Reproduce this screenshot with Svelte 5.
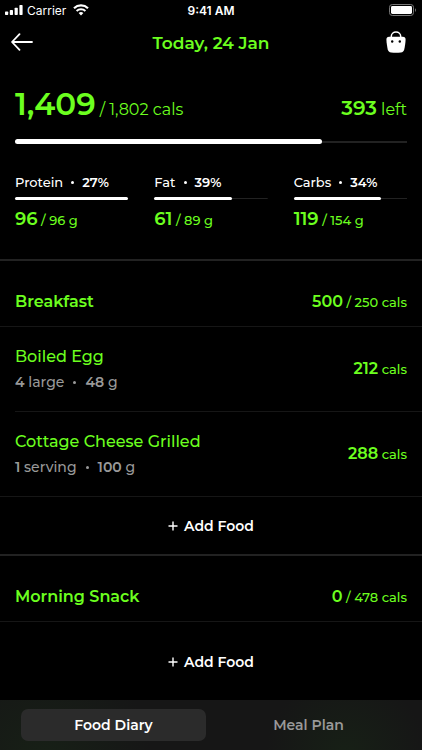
<script>
	let tab = 'diary';

	const eaten = 1409;
	const goal = 1802;

	const macros = [
		{ name: 'Protein', share: 27, value: 96, goal: 96 },
		{ name: 'Fat', share: 39, value: 61, goal: 89 },
		{ name: 'Carbs', share: 34, value: 119, goal: 154 }
	];

	const meals = [
		{
			name: 'Breakfast',
			cals: 500,
			goal: 250,
			foods: [
				{ name: 'Boiled Egg', count: 4, unit: 'large', grams: 48, cals: 212 },
				{ name: 'Cottage Cheese Grilled', count: 1, unit: 'serving', grams: 100, cals: 288 }
			]
		},
		{ name: 'Morning Snack', cals: 0, goal: 478, foods: [] }
	];

	function percent(value, max) {
		return Math.min(100, (value / max) * 100);
	}
</script>

<div class="app">
	<div class="status">
		<div class="carrier">
			<svg width="18" height="10" viewBox="0 0 18 10" fill="#fff" aria-hidden="true">
				<rect x="0" y="6.5" width="3.2" height="3.5" rx="0.7" />
				<rect x="4.8" y="5" width="3.2" height="5" rx="0.7" />
				<rect x="9.6" y="2.7" width="3.2" height="7.3" rx="0.7" />
				<rect x="14.4" y="0" width="3.2" height="10" rx="0.7" />
			</svg>
			<span>Carrier</span>
			<svg class="wifi" width="16" height="12" viewBox="0 0 16 12" aria-hidden="true">
				<path d="M1 4.2a10.2 10.2 0 0 1 14 0" fill="none" stroke="#fff" stroke-width="2.2" />
				<path d="M3.6 7a6.4 6.4 0 0 1 8.8 0" fill="none" stroke="#fff" stroke-width="2" />
				<path d="M5.6 9.1a3.5 3.5 0 0 1 4.8 0L8 11.6z" fill="#fff" />
			</svg>
		</div>
		<span class="time">9:41 AM</span>
		<svg class="battery" width="28" height="12" viewBox="0 0 28 12" aria-hidden="true">
			<rect x="0.5" y="0.5" width="24" height="11" rx="2.8" fill="none" stroke="#777" />
			<rect x="2" y="2" width="21" height="8" rx="1.4" fill="#fff" />
			<path d="M26 4.2c1.3.4 1.3 3.2 0 3.6z" fill="#777" />
		</svg>
	</div>

	<header>
		<button class="icon" aria-label="Back">
			<svg width="22" height="18" viewBox="0 0 22 18" fill="none" stroke="#fff" stroke-width="1.8" stroke-linecap="round" stroke-linejoin="round">
				<path d="M8.5 1.2L1 9l7.5 7.8M1.2 9H21" />
			</svg>
		</button>
		<h1>Today, 24 Jan</h1>
		<button class="icon bag" aria-label="Shopping bag">
			<svg width="20" height="22" viewBox="0 0 20 22">
				<path d="M5.3 6.5V5.3a4.7 4.3 0 0 1 9.4 0v1.2" fill="none" stroke="#fff" stroke-width="1.5" />
				<path d="M3.2 5.8h13.6c1.9 0 2.9 1.1 2.8 3-.2 3.500-.7 6.700-1.300 9.400-.5 2-1.500 3-3.500 3.200-3.200.3-6.400.3-9.600 0-2-.2-3-1.200-3.500-3.200C1.100 15.500.6 12.300.4 8.800.3 6.900 1.300 5.800 3.200 5.800z" fill="#fff" />
				<circle cx="6.2" cy="10.5" r="1.2" fill="#000" />
				<circle cx="13.8" cy="10.5" r="1.2" fill="#000" />
			</svg>
		</button>
	</header>

	<section class="summary">
		<div class="totals">
			<div><span class="eaten">{eaten.toLocaleString('en-US')}</span> / {goal.toLocaleString('en-US')} cals</div>
			<div><span class="left">{goal - eaten}</span> left</div>
		</div>
		<div class="bar big">
			<div class="fill" style="width: {percent(eaten, goal)}%"></div>
		</div>

		<div class="macros">
			{#each macros as macro}
				<div class="macro">
					<div class="label">{macro.name}<i></i><b>{macro.share}%</b></div>
					<div class="bar">
						<div class="fill" style="width: {percent(macro.value, macro.goal)}%"></div>
					</div>
					<div class="grams"><b>{macro.value}</b> / {macro.goal} g</div>
				</div>
			{/each}
		</div>
	</section>

	{#each meals as meal}
		<section class="meal">
			<div class="meal-head">
				<h2>{meal.name}</h2>
				<div class="cals"><b>{meal.cals}</b> / {meal.goal} cals</div>
			</div>
			{#if meal.foods.length}
				<ul>
					{#each meal.foods as food}
						<li>
							<div>
								<h3>{food.name}</h3>
								<p><b>{food.count}</b> {food.unit}<i></i><b>{food.grams}</b> g</p>
							</div>
							<div class="cals"><b>{food.cals}</b> cals</div>
						</li>
					{/each}
				</ul>
			{/if}
			<button class="add" class:tall={!meal.foods.length}>
				<svg width="10" height="10" viewBox="0 0 10 10" stroke="#fff" stroke-width="1.4" aria-hidden="true">
					<path d="M5 0.5V9.5M0.5 5H9.5" />
				</svg>
				Add Food
			</button>
		</section>
	{/each}

	<nav>
		<button class:active={tab === 'diary'} on:click={() => (tab = 'diary')}>Food Diary</button>
		<button class:active={tab === 'plan'} on:click={() => (tab = 'plan')}>Meal Plan</button>
	</nav>
</div>

<style>
	:global(body) {
		background: #000;
	}

	.app {
		min-height: 100vh;
		display: flex;
		flex-direction: column;
		background: #000;
		color: #6cff1f;
		font-family: Montserrat, Inter, sans-serif;
		font-weight: 500;
	}

	h1,
	h2,
	h3,
	p,
	ul {
		margin: 0;
		padding: 0;
	}

	button {
		border: 0;
		padding: 0;
		background: none;
		color: #fff;
		font-family: inherit;
		cursor: pointer;
	}

	b {
		font-weight: 600;
	}

	/* dot between two facts */
	i {
		display: inline-block;
		width: 3px;
		height: 3px;
		margin: 0 8px;
		border-radius: 50%;
		background: currentColor;
		vertical-align: 3px;
	}

	.status {
		display: grid;
		grid-template-columns: 1fr auto 1fr;
		align-items: center;
		height: 20px;
		padding: 0 5px;
		color: #fff;
		font-family: Inter, sans-serif;
		font-size: 12px;
		font-weight: 400;
	}

	.carrier {
		display: flex;
		align-items: center;
		gap: 4px;
	}

	.wifi {
		margin-left: 3px;
	}

	.time {
		font-weight: 600;
	}

	.battery {
		justify-self: end;
	}

	header {
		display: grid;
		grid-template-columns: 1fr auto 1fr;
		align-items: center;
		height: 44px;
		padding: 0 11px;
	}

	.icon {
		display: flex;
		justify-self: start;
	}

	.bag {
		justify-self: end;
		padding-right: 5px;
	}

	h1 {
		padding-top: 2px;
		font-size: 17px;
		font-weight: 600;
		line-height: 24px;
	}

	.summary {
		padding: 20px 15px 26px;
	}

	.totals {
		display: flex;
		justify-content: space-between;
		align-items: baseline;
		font-size: 16px;
		font-weight: 400;
		line-height: 40px;
	}

	.eaten {
		font-size: 31px;
		font-weight: 600;
	}

	.left {
		font-size: 20px;
		font-weight: 600;
	}

	.bar {
		display: flex;
		align-items: center;
		height: 3px;
		background: linear-gradient(#222, #222) center / 100% 1px no-repeat;
	}

	.fill {
		height: 100%;
		border-radius: 3px;
		background: #fff;
	}

	.big {
		height: 5px;
		margin-top: 9px;
		background-size: 100% 2px;
	}

	.macros {
		display: grid;
		grid-template-columns: repeat(3, 1fr);
		gap: 26px;
		margin-top: 28px;
	}

	.label {
		margin-bottom: 5px;
		color: #fff;
		font-size: 13px;
		line-height: 20px;
	}

	.grams {
		margin-top: 6px;
		font-size: 13px;
		line-height: 26px;
	}

	.grams b {
		font-size: 18px;
	}

	.meal {
		border-top: 2px solid #222;
	}

	.meal-head {
		display: flex;
		justify-content: space-between;
		align-items: center;
		height: 65px;
		padding: 0 15px;
		border-bottom: 1px solid #161616;
	}

	.meal-head .cals,
	h2 {
		padding-top: 16px;
	}

	h2 {
		font-size: 16px;
		font-weight: 600;
		line-height: 20px;
	}

	.cals {
		font-size: 13px;
		line-height: 20px;
	}

	.cals b {
		font-size: 16px;
	}

	ul {
		list-style: none;
		border-bottom: 1px solid #161616;
	}

	li {
		display: flex;
		justify-content: space-between;
		align-items: center;
		height: 84px;
		margin-left: 15px;
		padding-right: 15px;
	}

	li + li {
		border-top: 1px solid #161616;
	}

	h3 {
		font-size: 16px;
		font-weight: 500;
		line-height: 26px;
	}

	p {
		color: #999;
		font-size: 14px;
		line-height: 24px;
	}

	p i {
		margin: 0 9px;
	}

	.add {
		display: flex;
		justify-content: center;
		align-items: center;
		gap: 6px;
		width: 100%;
		height: 57px;
		font-size: 14px;
		font-weight: 600;
	}

	.add.tall {
		height: 78px;
		padding-top: 2px;
	}

	nav {
		display: grid;
		grid-template-columns: 1fr 1fr;
		gap: 10px;
		margin-top: auto;
		padding: 9px 21px;
		background:
			radial-gradient(circle at 10% 120%, #172016, transparent 110px),
			radial-gradient(circle at 82% 110%, #172016, transparent 80px),
			#161616;
	}

	nav button {
		height: 32px;
		border-radius: 7px;
		color: #999;
		font-size: 14px;
		font-weight: 600;
	}

	nav .active {
		background: #2b2b2b;
		color: #fff;
	}
</style>
